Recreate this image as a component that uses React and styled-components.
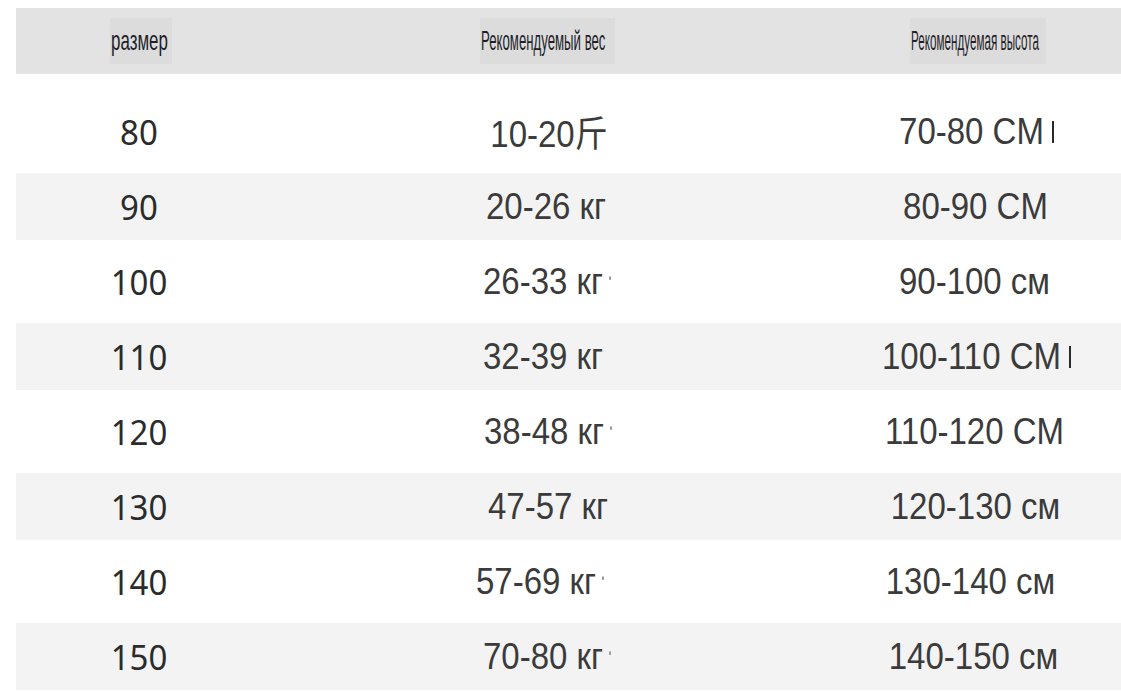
import React from 'react';
import styled, { createGlobalStyle } from 'styled-components';

const GlobalStyle = createGlobalStyle`
  html, body {
    margin: 0;
    padding: 0;
    background: #ffffff;
  }
  body {
    font-family: "Liberation Sans", Arial, sans-serif;
    color: #3a3a3a;
  }
`;

const Page = styled.div`
  width: 1121px;
  height: 691px;
  padding: 8px 0 0 16px;
  box-sizing: border-box;
  overflow: hidden;
`;

const Table = styled.div`
  display: flex;
  flex-direction: column;
`;

const Grid = styled.div`
  display: grid;
  grid-template-columns: 246px 566px 1fr;
  align-items: center;
`;

const HeaderRow = styled(Grid)`
  height: 66px;
  background: #e3e3e3;
  margin-bottom: 20px;
`;

const HeadCell = styled.div`
  display: flex;
  justify-content: center;
  transform: translateX(${p => p.$dx || 0}px);
`;

const HeadLabel = styled.span`
  display: inline-flex;
  align-items: center;
  height: 46px;
  width: ${p => p.$box}px;
  background: #dcdcdc;
  color: #1f1f2a;
  font-family: "Liberation Sans", Arial, sans-serif;
  font-size: 22px;
  white-space: nowrap;
  span {
    display: inline-block;
    margin-left: 1px;
    transform-origin: left center;
    transform: scale(${p => p.$sx}, 1.22);
  }
`;

const Row = styled(Grid)`
  height: 75px;
  padding: 4px 0;
  box-sizing: border-box;
  background: ${p => (p.$shaded ? '#f3f3f3' : '#ffffff')};
  background-clip: content-box;
`;

const SizeCell = styled.div`
  text-align: center;
  font-family: "Noto Sans", "Open Sans", sans-serif;
  font-size: 33px;
  color: #2b2b2b;
  transform: scaleY(1.05);
`;

const ValueCell = styled.div`
  display: flex;
  justify-content: center;
  transform: translateX(${p => p.$dx || 0}px);
`;

const Value = styled.span`
  position: relative;
  font-family: "Liberation Sans", Arial, "Noto Sans CJK SC", sans-serif;
  font-size: 33px;
  color: #3b3b3b;
  white-space: nowrap;
  display: inline-block;
  transform: scaleY(1.1);
`;

const Tick = styled.i`
  position: absolute;
  right: ${p => (p.$bar ? -10 : -8)}px;
  top: ${p => (p.$bar ? 9 : 14)}px;
  width: 2px;
  height: ${p => (p.$bar ? 20 : 3)}px;
  background: ${p => (p.$bar ? '#2a2a2a' : '#9a9a9a')};
`;

const sizes = [
  { size: '80', weight: '10-20斤', height: '70-80 CM', wdx: 4, hdx: -3, hmark: 'bar' },
  { size: '90', weight: '20-26 кг', height: '80-90 CM', wdx: 1, hdx: 1 },
  { size: '100', weight: '26-33 кг', height: '90-100 см', wdx: -2, hdx: 0, wmark: 'dot' },
  { size: '110', weight: '32-39 кг', height: '100-110 CM', wdx: -2, hdx: -3, hmark: 'bar' },
  { size: '120', weight: '38-48 кг', height: '110-120 CM', wdx: -1, hdx: 0, wmark: 'dot' },
  { size: '130', weight: '47-57 кг', height: '120-130 см', wdx: 3, hdx: 1 },
  { size: '140', weight: '57-69 кг', height: '130-140 см', wdx: -9, hdx: -4, wmark: 'dot' },
  { size: '150', weight: '70-80 кг', height: '140-150 см', wdx: -2, hdx: -1, wmark: 'dot' },
];

export default function App() {
  return (
    <Page>
      <GlobalStyle />
      <Table>
        <HeaderRow>
          <HeadCell $dx={2}>
            <HeadLabel $box={62} $sx={0.77}><span>размер</span></HeadLabel>
          </HeadCell>
          <HeadCell $dx={2}>
            <HeadLabel $box={135} $sx={0.6}><span>Рекомендуемый вес</span></HeadLabel>
          </HeadCell>
          <HeadCell $dx={3}>
            <HeadLabel $box={136} $sx={0.53}><span>Рекомендуемая высота</span></HeadLabel>
          </HeadCell>
        </HeaderRow>
        {sizes.map((r, i) => (
          <Row key={r.size} $shaded={i % 2 === 1}>
            <SizeCell>{r.size}</SizeCell>
            <ValueCell $dx={r.wdx}>
              <Value>
                {r.weight}
                {r.wmark && <Tick />}
              </Value>
            </ValueCell>
            <ValueCell $dx={r.hdx}>
              <Value>
                {r.height}
                {r.hmark && <Tick $bar />}
              </Value>
            </ValueCell>
          </Row>
        ))}
      </Table>
    </Page>
  );
}
